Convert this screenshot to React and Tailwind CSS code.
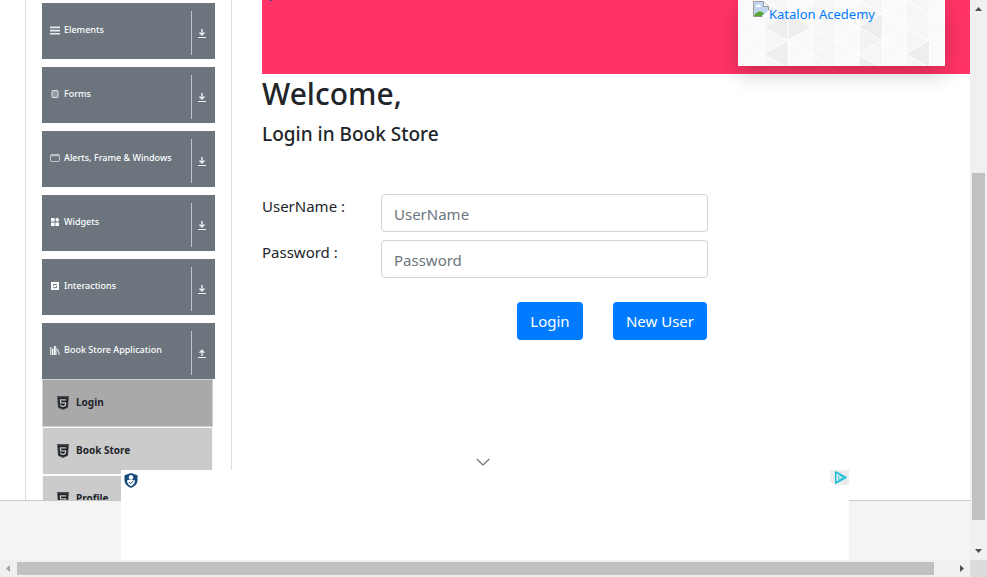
import React from "react";

const ListIcon = () => (
  <svg viewBox="0 0 10 9" className="h-[9px] w-[10px]" fill="currentColor" aria-hidden="true">
    <path d="M0 0.5h10v1.7H0zM0 3.7h10v1.7H0zM0 6.9h10v1.7H0z" opacity="0.85" />
  </svg>
);
const FormIcon = () => (
  <svg viewBox="0 0 10 10" className="h-[10px] w-[10px]" fill="none" stroke="currentColor" aria-hidden="true">
    <rect x="2" y="1.5" width="6" height="7" rx="0.8" fill="#9fa5aa" opacity="0.8" />
  </svg>
);
const WindowIcon = () => (
  <svg viewBox="0 0 10 10" className="h-[10px] w-[10px]" fill="none" stroke="currentColor" aria-hidden="true">
    <rect x="0.5" y="1.5" width="9" height="7" rx="1" opacity="0.6" />
    <path d="M1 2.6h8" strokeWidth="1.4" opacity="0.5" />
  </svg>
);
const WidgetsIcon = () => (
  <svg viewBox="0 0 10 10" className="h-[10px] w-[10px]" fill="currentColor" aria-hidden="true">
    <path d="M1 1h3.6v3.6H1zM1 5.4h3.6V9H1zM5.4 5.4H9V9H5.4zM7.2 0.6l2.2 2.2-2.2 2.2L5 2.8z" />
  </svg>
);
const InteractionsIcon = () => (
  <svg viewBox="0 0 10 10" className="h-[10px] w-[10px]" aria-hidden="true">
    <rect x="1" y="1" width="8" height="8" fill="currentColor" />
    <path d="M7 3.5H3.5V5M3.2 6.7h3.3V5" fill="none" stroke="#6c757d" />
  </svg>
);
const BooksIcon = () => (
  <svg viewBox="0 0 10 10" className="h-[10px] w-[10px]" fill="currentColor" aria-hidden="true">
    <path d="M0 2h1.500v8H0z" opacity="0.7" />
    <path d="M2 3.500h1.400V10H2zM4 1h1.700v9H4z" />
    <path d="M6.200 2.500h.8V10h-.8z" opacity="0.6" />
    <path d="M7 4l1-.3L10 9.500l-1 .5z" opacity="0.85" />
  </svg>
);

const HtmlBadge = () => (
  <svg viewBox="0 0 12 14" className="h-[14px] w-3 shrink-0" aria-hidden="true">
    <path d="M0 0h12l-1 11.800L6 14l-5-2.200z" fill="#4a4e52" />
    <path d="M1 1.500h10l-.8 9.500L6 12.800 1.800 11z" fill="#1d2125" />
    <path d="M9.300 3.800H3.400l.2 3h5l-.3 2.800L6 10.500l-2.300-.9-.1-1" fill="none" stroke="#c4c6c8" strokeWidth="1.300" />
  </svg>
);

const ToggleArrow = ({ up }) => (
  <svg viewBox="0 0 8 9" className="h-[9px] w-2" fill="none" stroke="currentColor" aria-hidden="true">
    <path d={up ? "M4 7V1.2M1.5 3.8L4 1.2l2.5 2.6" : "M4 0v6M1.5 3.4L4 6l2.5-2.6"} strokeWidth="1.4" />
    <path d="M0 8.5h8" />
  </svg>
);

const Shield = () => (
  <svg viewBox="0 0 14 15" className="h-[15px] w-[14px]" aria-hidden="true">
    <path d="M7 0l6.500 2.300v5C13.500 11 10.500 13.500 7 15 3.500 13.500.5 11 .5 7.300v-5z" fill="#174a7c" />
    <circle cx="7" cy="4.300" r="2.200" fill="#fff" />
    <path d="M3 7.500c2.500-1.500 5.500-1.500 8 0 0 2.800-1.800 4.700-4 5.700-2.200-1-4-2.900-4-5.700z" fill="#fff" />
    <path d="M4.800 9l1.800 1.800L9.500 7.700" fill="none" stroke="#174a7c" />
  </svg>
);

const BrokenImage = () => (
  <svg viewBox="0 0 16 16" className="h-4 w-4 shrink-0" aria-hidden="true">
    <path d="M.5.5h10l5 5v10H.5z" fill="#c3d4f0" stroke="#9a9a9a" />
    <path d="M3 5.500c0-1.200 1-1.800 2-1.500.8-1 2.500-.5 2.500.7.800.2.800 1.300 0 1.300H3.500z" fill="#fff" />
    <path d="M1 15c1.500-3.500 4-5 7-4.500l3 1.500-3 3.500z" fill="#55a630" />
    <path d="M10.500.5v5h5" fill="#fff" stroke="#9a9a9a" />
    <path d="M9 16l7-7v7z" fill="#fff" />
  </svg>
);

const SHADED = [
  "26,54 50,40.700 50,68", "26,27 50,40.700 73.700,27 50,13.500", "121,27 144.300,40.700 144.300,13.500",
  "121,54 144.300,68 121,81", "168,54 191.300,40.700 191.300,68", "121,54 144.300,40.700 121,27",
];
const COLUMNS = [2, 26, 50, 73.7, 97.3, 121, 144.5, 168, 191.5];
const RISES = [-122, -95, -68, -41, -13.5, 13.5, 40.7, 68, 95, 122, 149, 176];

const TrianglePattern = () => (
  <svg className="absolute inset-0 h-full w-full" aria-hidden="true">
    <rect width="100%" height="100%" fill="#f8f8f8" />
    {COLUMNS.map((x, i) => (
      <rect key={x} x={x} y="0" width="24" height="66" fill={i % 2 ? "#f6f6f6" : "#fafafa"} />
    ))}
    {SHADED.map((p, i) => (
      <polygon key={p} points={p} fill={i === 5 ? "#f3f3f3" : "#eeeeee"} />
    ))}
    <g stroke="#fff" strokeWidth="1">
      {COLUMNS.map((x) => <path key={x} d={`M${x} 0V66`} />)}
      {RISES.map((y) => (
        <path key={y} d={`M2 ${y}L215 ${y + 122.400}M2 ${y}L215 ${y - 122.400}`} />
      ))}
    </g>
  </svg>
);

const GROUPS = [
  { name: "Elements", Icon: ListIcon },
  { name: "Forms", Icon: FormIcon },
  { name: "Alerts, Frame & Windows", Icon: WindowIcon },
  { name: "Widgets", Icon: WidgetsIcon },
  { name: "Interactions", Icon: InteractionsIcon },
  { name: "Book Store Application", Icon: BooksIcon, items: ["Login", "Book Store", "Profile"] },
];

function Sidebar() {
  return (
    <nav className="ml-[25px] w-[207px] shrink-0 border-x border-[#dcdcdc] px-4 pt-[3px]">
      <div className="flex flex-col gap-2">
        {GROUPS.map(({ name, Icon, items }) => (
          <div key={name}>
            <button type="button" className="flex h-14 w-full items-center bg-[#6c757d] pl-2 pr-[9px] text-left text-[9px] font-medium text-white">
              <span className="flex flex-1 items-center gap-1 pb-[2px] whitespace-nowrap">
                <Icon />
                {name}
              </span>
              <span className="mt-1 flex h-11 items-center border-l border-[#c0c4c8] pl-[6px] text-[#e9ebec]">
                <ToggleArrow up={Boolean(items)} />
              </span>
            </button>
            {items && (
              <ul className="mr-[2px]">
                {items.map((item, i) => (
                  <li key={item}>
                    <a
                      href="#"
                      className={
                        "flex h-12 items-center gap-[7px] border px-[14px] pb-px text-[10px] font-bold text-[#212529] " +
                        (i === 0 ? "border-[#ccd0d9] bg-[#a9a9a9]" : "border-[#f8f9fa] bg-[#cbcbcb]")
                      }
                    >
                      <HtmlBadge />
                      {item}
                    </a>
                  </li>
                ))}
              </ul>
            )}
          </div>
        ))}
      </div>
    </nav>
  );
}

const FIELD =
  "h-[38px] w-full rounded border border-[#ced4da] bg-white px-3 pt-[2px] text-[15px] font-normal text-[#495057] outline-none placeholder:text-[#6c757d]";
const BUTTON = "h-[38px] rounded bg-[#007bff] text-[15px] text-white";

function LoginPage() {
  return (
    <main className="ml-[30px] min-w-0 flex-1">
      <div className="relative flex h-[74px] items-start justify-end bg-[#ff3366] pr-[25px]">
        <div className="absolute -top-[14px] left-[2px]"><Shield /></div>
        <div className="relative h-[66px] w-[207px] shadow-[0_8px_20px_rgba(0,0,0,0.2)]">
          <TrianglePattern />
          <a href="#" className="relative flex pl-[15px] pt-px text-[13px] leading-[26px] text-[#007bff]">
            <BrokenImage />
            Katalon Acedemy
          </a>
        </div>
      </div>
      <h1 className="text-[30px] leading-10 font-medium">Welcome,</h1>
      <h2 className="mt-2 text-[19px] leading-6 font-medium">Login in Book Store</h2>
      <form className="mt-12 max-w-[446px]" onSubmit={(e) => e.preventDefault()}>
        <div className="grid grid-cols-[119px_1fr] gap-y-2">
          <label htmlFor="userName" className="text-[15px] leading-6">UserName :</label>
          <input id="userName" placeholder="UserName" className={FIELD} />
          <label htmlFor="password" className="text-[15px] leading-6">Password :</label>
          <input id="password" type="password" placeholder="Password" className={FIELD} />
        </div>
        <div className="mt-6 flex justify-end gap-[30px] pr-px">
          <button type="submit" className={BUTTON + " w-[66px]"}>Login</button>
          <button type="button" className={BUTTON + " w-[94px]"}>New User</button>
        </div>
      </form>
    </main>
  );
}

function AdBar() {
  return (
    <aside className="absolute bottom-0 left-1/2 h-[90px] w-[728px] -translate-x-1/2 bg-white">
      <div className="flex justify-between pl-[3px]">
        <div className="pt-[3px]"><Shield /></div>
        <svg viewBox="0 0 19 15" className="h-[15px] w-[19px]" aria-hidden="true">
          <path d="M0 0h19v15H5L0 11z" fill="#ececec" />
          <path d="M5.700 2v11L16 7.500z" fill="#ececec" stroke="#15bfd8" strokeWidth="1.500" strokeLinejoin="round" />
          <path d="M8.800 5.500v5M9.500 5l3.500 2.500-3.500 2" fill="none" stroke="#15bfd8" strokeWidth="0.900" />
        </svg>
      </div>
      <button type="button" aria-label="Collapse" className="absolute -top-3 left-[355px]">
        <svg viewBox="0 0 14 8" className="h-2 w-[14px]" fill="none" stroke="#707070" strokeWidth="1.200" aria-hidden="true">
          <path d="M.7 1L7 7 13.300 1" />
        </svg>
      </button>
    </aside>
  );
}

const Arrow = ({ d, color }) => (
  <svg viewBox="0 0 17 17" className="h-[17px] w-[17px] shrink-0" fill={color} aria-hidden="true">
    <path d={d} />
  </svg>
);

export default function App() {
  return (
    <div className="grid h-screen grid-cols-[minmax(0,1fr)_17px] grid-rows-[minmax(0,1fr)_17px] overflow-hidden bg-white font-['Segoe_UI','Noto_Sans',sans-serif] text-[#212529]">
      <div className="relative flex flex-col overflow-hidden">
        <div className="flex min-h-0 flex-1 overflow-hidden">
          <Sidebar />
          <LoginPage />
        </div>
        <footer className="h-[60px] shrink-0 border-t border-[#c8c8c8] bg-[#f4f4f4]" />
        <AdBar />
      </div>
      <div className="flex flex-col items-center bg-[#f0f0f0]">
        <Arrow d="M5 11l3.500-4 3.500 4z" color="#505050" />
        <div className="flex w-[13px] flex-1 flex-col">
          <div className="flex-[156]" />
          <div className="flex-[347] bg-[#c1c1c1]" />
          <div className="flex-[23]" />
        </div>
        <Arrow d="M5 6l3.500 4L12 6z" color="#505050" />
      </div>
      <div className="flex items-center bg-[#f0f0f0]">
        <Arrow d="M10 5L6 8.500l4 3.500z" color="#a3a3a3" />
        <div className="flex h-[13px] flex-1">
          <div className="flex-[917] bg-[#c1c1c1]" />
          <div className="flex-[19]" />
        </div>
        <Arrow d="M7 5l4 3.500L7 12z" color="#505050" />
      </div>
      <div className="bg-[#dcdcdc]" />
    </div>
  );
}
